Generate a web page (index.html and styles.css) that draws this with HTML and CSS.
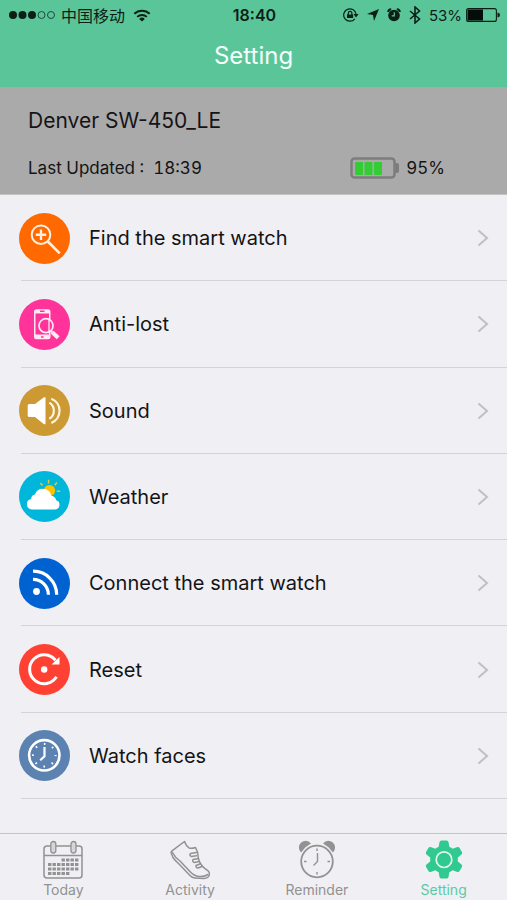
FILE: index.html
```html
<!DOCTYPE html>
<html lang="en">
<head>
<meta charset="utf-8">
<meta name="viewport" content="width=device-width, initial-scale=1">
<title>Setting</title>
<link rel="stylesheet" href="styles.css">
</head>
<body>
<header class="top">
  <div class="status">
    <div class="status-left">
      <svg width="46" height="10" viewBox="0 0 46 10" aria-hidden="true"><g fill="#0b1f17"><circle cx="4" cy="5" r="4"/><circle cx="13.500" cy="5" r="4"/><circle cx="23" cy="5" r="4"/></g><g fill="none" stroke="#1f4a39" stroke-width="1"><circle cx="32.500" cy="5" r="3.500"/><circle cx="42" cy="5" r="3.500"/></g></svg>
      <span class="carrier" lang="zh-CN">中国移动</span>
      <svg width="18" height="13" viewBox="0 0 18 13" aria-hidden="true"><g fill="none" stroke="#0b1f17" stroke-width="2"><path d="M1.300 4.800a11 11 0 0 1 15.400 0"/><path d="M4.200 7.900a6.900 6.900 0 0 1 9.600 0"/></g><path d="M9 12.500L6.200 9.900a4 4 0 0 1 5.600 0z" fill="#0b1f17"/></svg>
    </div>
    <span class="clock">18:40</span>
    <div class="status-right">
      <svg width="16" height="14" viewBox="0 0 16 14" aria-hidden="true"><path d="M11.800 10.800A6.200 6.200 0 1 1 13 6" fill="none" stroke="#0b1f17" stroke-width="1.200"/><path d="M10.600 6h5L13 9.500z" fill="#0b1f17"/><path d="M4 6.500h6.200V10H4z" fill="#0b1f17"/><path d="M5.300 7V5.200a1.800 1.800 0 0 1 3.600 0V7" fill="none" stroke="#0b1f17" stroke-width="1.200"/></svg>
      <svg width="12" height="12" viewBox="0 0 12 12" aria-hidden="true"><path d="M12 0L7 12 6 6 0 5z" fill="#0b1f17"/></svg>
      <svg width="14" height="14" viewBox="0 0 14 14" aria-hidden="true"><circle cx="7" cy="7.500" r="5.800" fill="#0b1f17"/><path d="M1.200 4A3 3 0 0 1 4.200 1.200M12.800 4A3 3 0 0 0 9.800 1.200" fill="none" stroke="#0b1f17" stroke-width="2"/><path d="M7.300 4.300v3.500H4.700" fill="none" stroke="#5bc59a" stroke-width="1.200"/></svg>
      <svg width="12" height="18" viewBox="0 0 12 18" aria-hidden="true"><path d="M1 5l9.500 8L6 17V1l4.500 4L1 13" fill="none" stroke="#0b1f17" stroke-width="1.600"/></svg>
      <span class="percent">53%</span>
      <svg class="phone-battery" width="34" height="14" viewBox="0 0 34 14" aria-hidden="true"><rect x=".6" y=".6" width="29.800" height="12.800" rx="2" fill="none" stroke="#0b1f17" stroke-width="1.100"/><path d="M1.500 1.500h15.500v11H1.500z" fill="#050d0a"/><path d="M31.500 4.500a2.500 2.500 0 0 1 0 5z" fill="#0b1f17"/></svg>
    </div>
  </div>
  <h1>Setting</h1>
</header>

<section class="device">
  <h2>Denver SW-450_LE</h2>
  <div class="device-info">
    <p class="updated">Last Updated :&nbsp; 18:39</p>
    <p class="charge">
      <svg width="49" height="22" viewBox="0 0 49 22" aria-hidden="true"><rect x="1.500" y="1.500" width="43" height="19" rx="3" fill="none" stroke="#7d7d7d" stroke-width="2.500"/><path d="M45 6h2q2 0 2 2v6q0 2-2 2h-2z" fill="#7d7d7d"/><g fill="#32cd32"><rect x="5" y="5" width="8" height="13" rx="1"/><rect x="14.500" y="5" width="8" height="13" rx="1"/><rect x="24" y="5" width="8" height="13" rx="1"/></g></svg>
      95%
    </p>
  </div>
</section>

<main class="menu">
  <a class="row" href="#find">
    <svg class="badge" viewBox="0 0 51 51" aria-hidden="true"><circle cx="25.500" cy="25.500" r="25.500" fill="#ff6900"/><g fill="none" stroke="#fff1e4"><circle cx="22" cy="21.700" r="9.300" stroke-width="2"/><path d="M22 16.500v10.400M16.800 21.700h10.400" stroke-width="2.400"/><path d="M28.800 28.500l11.900 11.800" stroke-width="2.600"/></g></svg>
    <span class="label">Find the smart watch</span>
    <svg class="chevron" viewBox="0 0 12 18" aria-hidden="true"><path d="M1.500 1.500L10 9l-8.500 7.500"/></svg>
  </a>
  <a class="row" href="#anti-lost">
    <svg class="badge" viewBox="0 0 51 51" aria-hidden="true"><circle cx="25.500" cy="25.500" r="25.500" fill="#ff3399"/><path d="M17.500 10.300h11.500a2.500 2.500 0 0 1 2.500 2.500v25a2.500 2.500 0 0 1-2.500 2.500H17.500a2.500 2.500 0 0 1-2.500-2.500v-25a2.500 2.500 0 0 1 2.500-2.500z" fill="#ffe9f4"/><path d="M16.500 14.500h13.500v21H16.500z" fill="#ff3399"/><path d="M21 12.300h4.500M22 38h2.600" stroke="#ff3399" stroke-width="1.400"/><circle cx="27" cy="26.700" r="7" fill="#ff3399" stroke="#ffe9f4" stroke-width="1.700"/><path d="M30 20.500v12.300" stroke="#ffe9f4" stroke-width="1.300"/><path d="M31.800 31.800l1.700 1.700" stroke="#ffe9f4" stroke-width="2"/><path d="M33.200 33.200l6 5.600" stroke="#ffe9f4" stroke-width="4"/></svg>
    <span class="label">Anti-lost</span>
    <svg class="chevron" viewBox="0 0 12 18" aria-hidden="true"><path d="M1.500 1.500L10 9l-8.500 7.500"/></svg>
  </a>
  <a class="row" href="#sound">
    <svg class="badge" viewBox="0 0 51 51" aria-hidden="true"><circle cx="25.500" cy="25.500" r="25.500" fill="#cc9933"/><path d="M10.200 19H16l9-6.700h1.500v27H25L16 32h-5.800q-1.500 0-1.500-1.500v-10q0-1.500 1.500-1.500z" fill="#fff"/><g fill="none" stroke="#fff6e0" stroke-width="2.200"><path d="M30.300 17.600a9.500 9.500 0 0 1 0 16.200"/><path d="M32.300 13.700a13 13 0 0 1 0 24.200"/></g></svg>
    <span class="label">Sound</span>
    <svg class="chevron" viewBox="0 0 12 18" aria-hidden="true"><path d="M1.500 1.500L10 9l-8.500 7.500"/></svg>
  </a>
  <a class="row" href="#weather">
    <svg class="badge" viewBox="0 0 51 51" aria-hidden="true"><circle cx="25.500" cy="25.500" r="25.500" fill="#00b7db"/><circle cx="30.500" cy="19.500" r="5.600" fill="#fdc300"/><path d="M21.300 12.200l2.300 2.200M29.600 8.800v3.600M38 11.600l-2.300 2.700M37.800 20.200h3.400" stroke="#d4cf3f" stroke-width="1.500"/><path d="M13 38.500a5.300 5.300 0 0 1-.8-10.500q0-4 3.700-4.500a8.600 8.600 0 0 1 16.500 1.300q4 .5 4.700 4.500a4.700 4.700 0 0 1-1 9.200z" fill="#fff"/></svg>
    <span class="label">Weather</span>
    <svg class="chevron" viewBox="0 0 12 18" aria-hidden="true"><path d="M1.500 1.500L10 9l-8.500 7.500"/></svg>
  </a>
  <a class="row" href="#connect">
    <svg class="badge" viewBox="0 0 51 51" aria-hidden="true"><circle cx="25.500" cy="25.500" r="25.500" fill="#0062d1"/><circle cx="17.500" cy="33.500" r="3.400" fill="#fff"/><g fill="none" stroke="#fff" stroke-width="3.200"><path d="M14 21.400a15.300 15.300 0 0 1 15.400 15.300"/><path d="M14 13.200a23.500 23.500 0 0 1 23.700 23.500"/></g></svg>
    <span class="label">Connect the smart watch</span>
    <svg class="chevron" viewBox="0 0 12 18" aria-hidden="true"><path d="M1.500 1.500L10 9l-8.500 7.500"/></svg>
  </a>
  <a class="row" href="#reset">
    <svg class="badge" viewBox="0 0 51 51" aria-hidden="true"><circle cx="25.500" cy="25.500" r="25.500" fill="#ff4133"/><path d="M37.500 32.800A14.500 14.500 0 1 1 36.500 16.200" fill="none" stroke="#fff" stroke-width="3"/><path d="M40.500 13v7.500h-8z" fill="#fff"/><circle cx="25.200" cy="25.500" r="3.200" fill="#fff"/></svg>
    <span class="label">Reset</span>
    <svg class="chevron" viewBox="0 0 12 18" aria-hidden="true"><path d="M1.500 1.500L10 9l-8.500 7.500"/></svg>
  </a>
  <a class="row" href="#faces">
    <svg class="badge" viewBox="0 0 51 51" aria-hidden="true"><circle cx="25.500" cy="25.500" r="25.500" fill="#5b82b0"/><g fill="none" stroke="#fff"><circle cx="25.300" cy="25.300" r="15.200" stroke-width="2.600"/><circle cx="25.300" cy="25.300" r="11.300" stroke-width="2" stroke-dasharray="1.600 7.275" stroke-dashoffset=".8"/><path d="M25.500 17v9.300l-4.300 4" stroke-width="2.200"/></g></svg>
    <span class="label">Watch faces</span>
    <svg class="chevron" viewBox="0 0 12 18" aria-hidden="true"><path d="M1.500 1.500L10 9l-8.500 7.500"/></svg>
  </a>
</main>

<nav class="tabs">
  <a class="tab" href="#today">
    <svg viewBox="0 0 40 40" aria-hidden="true"><g fill="none" stroke="#929292" stroke-width="1.500"><rect x="1" y="6" width="38" height="32" rx="3"/><path d="M1 15.500h38"/></g><g fill="#d6d6d9" stroke="#929292" stroke-width="1.300"><rect x="7.800" y="1.500" width="5" height="11.500" rx="2.500"/><rect x="28" y="1.500" width="5" height="11.500" rx="2.500"/></g><g stroke="#929292" stroke-width="3.200" stroke-dasharray="3.400 1.100"><path d="M18.500 20H36"/><path d="M5 24.500h31"/><path d="M5 29h31"/><path d="M5 33.500h21.400"/></g></svg>
    <span>Today</span>
  </a>
  <a class="tab" href="#activity">
    <svg viewBox="0 0 40 40" aria-hidden="true"><g fill="none" stroke="#929292" stroke-width="1.500" stroke-linejoin="round" stroke-linecap="round"><path d="M14.500 1.500L2 10.800q-1.500 1.200-.5 3L3 17.500q2 3 6 6.500l11 11.500q2 2.300 5 2.500l9 .5q5-.5 5.500-4.500.3-2.500-4-5-5-3.500-7-10l-1-7-2-4.500q-4.500 1.500-6.500.3-3-2-4.500-6.300z"/><path d="M2.500 12.500q2.500 5 7.500 8.500l10 10.500q4 4.500 9 5t9-2"/><path d="M20.500 13.500l6-1M20.500 13.500q-1.500 2 1 3l5-.8M23 19.500l5.500-1M23 19.500q-1 2.500 1.500 3l4.500-1M26 25.500l4.500-1.700M26 25.500q0 2.500 2 2.500l4-1.500"/></g></svg>
    <span>Activity</span>
  </a>
  <a class="tab" href="#reminder">
    <svg viewBox="0 0 40 40" aria-hidden="true"><path d="M4 12.500C.5 8.500 1.500 3 6.500 1.200q4.500-1.400 7.500 2.300L8.500 7.200zM36 12.500C39.500 8.500 38.500 3 33.500 1.200q-4.500-1.400-7.500 2.300l5.500 3.700z" fill="#929292"/><g fill="none" stroke="#929292"><circle cx="20" cy="21.500" r="15.800" stroke-width="1.800"/><path d="M20.500 13v8.500l-4 4M20 8.500v2.500M20 32v2.500M7 21.500h2.500M30.500 21.500H33" stroke-width="1.400"/></g></svg>
    <span>Reminder</span>
  </a>
  <a class="tab active" href="#setting" aria-current="page">
    <svg viewBox="0 0 40 40" aria-hidden="true"><path d="M15.500 2q.3-1.500 2-1.500h5q1.700 0 2 1.500l.8 4.800 3.500 2 4.500-1.700q1.500-.5 2.300.8l2.300 4q.8 1.500-.4 2.500l-3.700 3v4.200l3.700 3q1.200 1 .4 2.500l-2.300 4q-.8 1.300-2.300.8l-4.500-1.700-3.500 2-.8 4.800q-.3 1.500-2 1.500h-5q-1.700 0-2-1.500l-.8-4.800-3.500-2-4.500 1.700q-1.500.5-2.300-.8l-2.300-4q-.8-1.500.4-2.500l3.700-3v-4.200l-3.700-3q-1.200-1-.4-2.500l2.300-4q.8-1.300 2.300-.8l4.500 1.700 3.500-2z" fill="#30c990"/><circle cx="20" cy="19.700" r="7.800" fill="none" stroke="#e3f6ee" stroke-width="1.700"/></svg>
    <span>Setting</span>
  </a>
</nav>
</body>
</html>
```
FILE: styles.css
```css
* { box-sizing: border-box; }

body {
  margin: 0;
  min-height: 100vh;
  display: flex;
  flex-direction: column;
  background: #efeff4;
  color: #141416;
  font-family: Inter, "Noto Sans CJK SC", sans-serif;
}

h1, h2, p { margin: 0; font-weight: 400; }
a { color: inherit; text-decoration: none; }
svg { display: block; flex: none; }

.top {
  height: 87px;
  background: #5bc59a;
}

.status {
  display: grid;
  grid-template-columns: 1fr auto 1fr;
  align-items: center;
  height: 30px;
  padding: 0 7px 0 9px;
  color: #0b1f17;
  font-size: 16px;
}

.status-left, .status-right { display: flex; align-items: center; }
.status-left { gap: 8px; }
.status-left .carrier { margin-left: -2px; font-family: "Noto Sans CJK SC", sans-serif; line-height: 24px; }
.status-right { justify-content: flex-end; gap: 8px; }
.clock { font-weight: 600; }
.percent { font-size: 15px; }
.phone-battery { margin-left: -4px; }

.top h1 {
  color: #f4fffa;
  font-size: 24px;
  line-height: 52px;
  text-align: center;
}

.device {
  height: 108px;
  padding: 20px 28px 0;
  background: #aaa;
  border-bottom: 1px solid #c4c4c6;
}

.device h2 { font-size: 21px; line-height: 28px; }

.device-info {
  display: grid;
  grid-template-columns: 5fr 2fr;
  align-items: center;
  margin-top: 20px;
  font-size: 17px;
  font-variant-numeric: tabular-nums;
  line-height: 26px;
}

.charge { display: flex; align-items: center; gap: 7px; }

.menu {
  flex: 1;
  display: grid;
  grid-auto-rows: 1fr;
  padding: 0 0 34px 19px;
}

.row {
  display: flex;
  align-items: center;
  gap: 19px;
  min-height: 60px;
  padding-right: 18px;
  background: linear-gradient(#d4d4d8, #d4d4d8) 2px 100% / 100% 1px no-repeat;
}

.badge { width: 51px; height: 51px; }
.label { flex: 1; font-size: 20px; line-height: 28px; }

.chevron {
  width: 12px;
  height: 18px;
  fill: none;
  stroke: #bfbfc4;
  stroke-width: 2;
}

.tabs {
  display: grid;
  grid-template-columns: repeat(4, 1fr);
  height: 67px;
  border-top: 1px solid #c4c4c8;
}

.tab {
  display: flex;
  flex-direction: column;
  align-items: center;
  padding-top: 6px;
  color: #929292;
  font-size: 14px;
  line-height: 20px;
}

.tab svg { width: 40px; height: 40px; }
.active { color: #5bcba3; }
```
